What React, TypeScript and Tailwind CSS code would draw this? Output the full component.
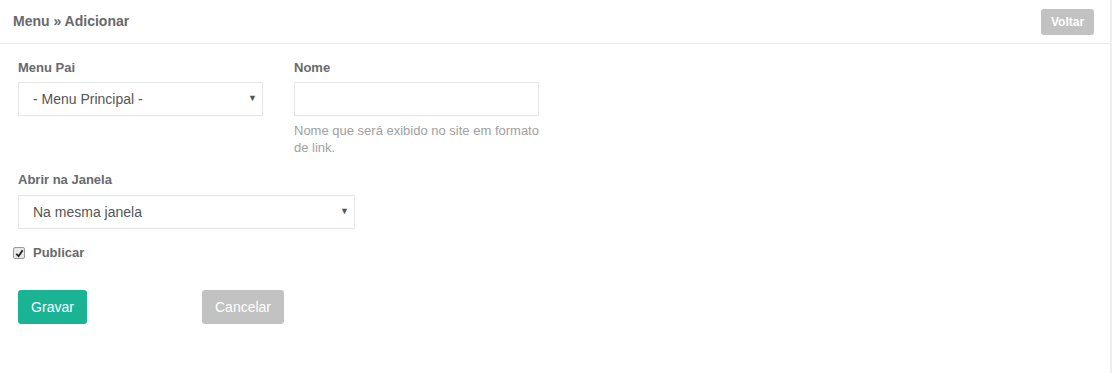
export default function App() {
  const font = { fontFamily: '"Liberation Sans", Arial, sans-serif' };

  return (
    <div
      className="w-[1112px] h-[373px] bg-white border-r-2 border-[#eeeeee] text-[#676a6c]"
      style={font}
    >
      <div className="h-[44px] border-b border-[#e7eaec] flex items-center justify-between pl-[13px] pr-[16px]">
        <h2 className="text-[14px] font-bold text-[#676a6c]">Menu » Adicionar</h2>
        <button
          type="button"
          className="h-[26px] w-[53px] rounded-[3px] bg-[#c2c2c2] text-white text-[12px] font-bold"
        >
          Voltar
        </button>
      </div>

      <form className="pl-[18px] pt-[16px]">
        <div className="flex gap-[31px]">
          <div className="w-[245px]">
            <label className="block text-[13px] font-bold mb-[6px] leading-[16px]">Menu Pai</label>
            <div className="relative h-[34px] border border-[#e5e6e7] flex items-center pl-[14px] text-[14px] text-[#555]">
              - Menu Principal -
              <span className="absolute right-[5px] top-[9px] text-[9px] text-[#555]">▼</span>
            </div>
          </div>
          <div className="w-[245px]">
            <label className="block text-[13px] font-bold mb-[6px] leading-[16px]">Nome</label>
            <input className="block w-full h-[34px] border border-[#e5e6e7] outline-none" />
            <p className="mt-[6px] text-[13px] leading-[17px] text-[#a0a0a0]">
              Nome que será exibido no site em formato de link.
            </p>
          </div>
        </div>

        <div className="mt-[16px] w-[337px]">
          <label className="block text-[13px] font-bold mb-[7px] leading-[16px]">Abrir na Janela</label>
          <div className="relative h-[34px] border border-[#e5e6e7] flex items-center pl-[14px] text-[14px] text-[#555]">
            Na mesma janela
            <span className="absolute right-[5px] top-[9px] text-[9px] text-[#555]">▼</span>
          </div>
        </div>

        <div className="mt-[15px] -ml-[5px] h-[18px] flex items-center gap-[8px]">
          <span className="w-[12px] h-[12px] border border-[#9a9a9a] rounded-[2px] bg-[#e8e8e8] flex items-center justify-center">
            <svg width="9" height="9" viewBox="0 0 10 10">
              <path d="M1.5 5.5 L4 8 L8.5 1.5" fill="none" stroke="#222" strokeWidth="2" />
            </svg>
          </span>
          <span className="text-[13px] font-bold">Publicar</span>
        </div>

        <div className="mt-[28px] flex gap-[115px]">
          <button
            type="button"
            className="h-[34px] w-[69px] rounded-[3px] bg-[#1ab394] text-white text-[14px]"
          >
            Gravar
          </button>
          <button
            type="button"
            className="h-[34px] w-[82px] rounded-[3px] bg-[#c2c2c2] text-white text-[14px]"
          >
            Cancelar
          </button>
        </div>
      </form>
    </div>
  );
}
